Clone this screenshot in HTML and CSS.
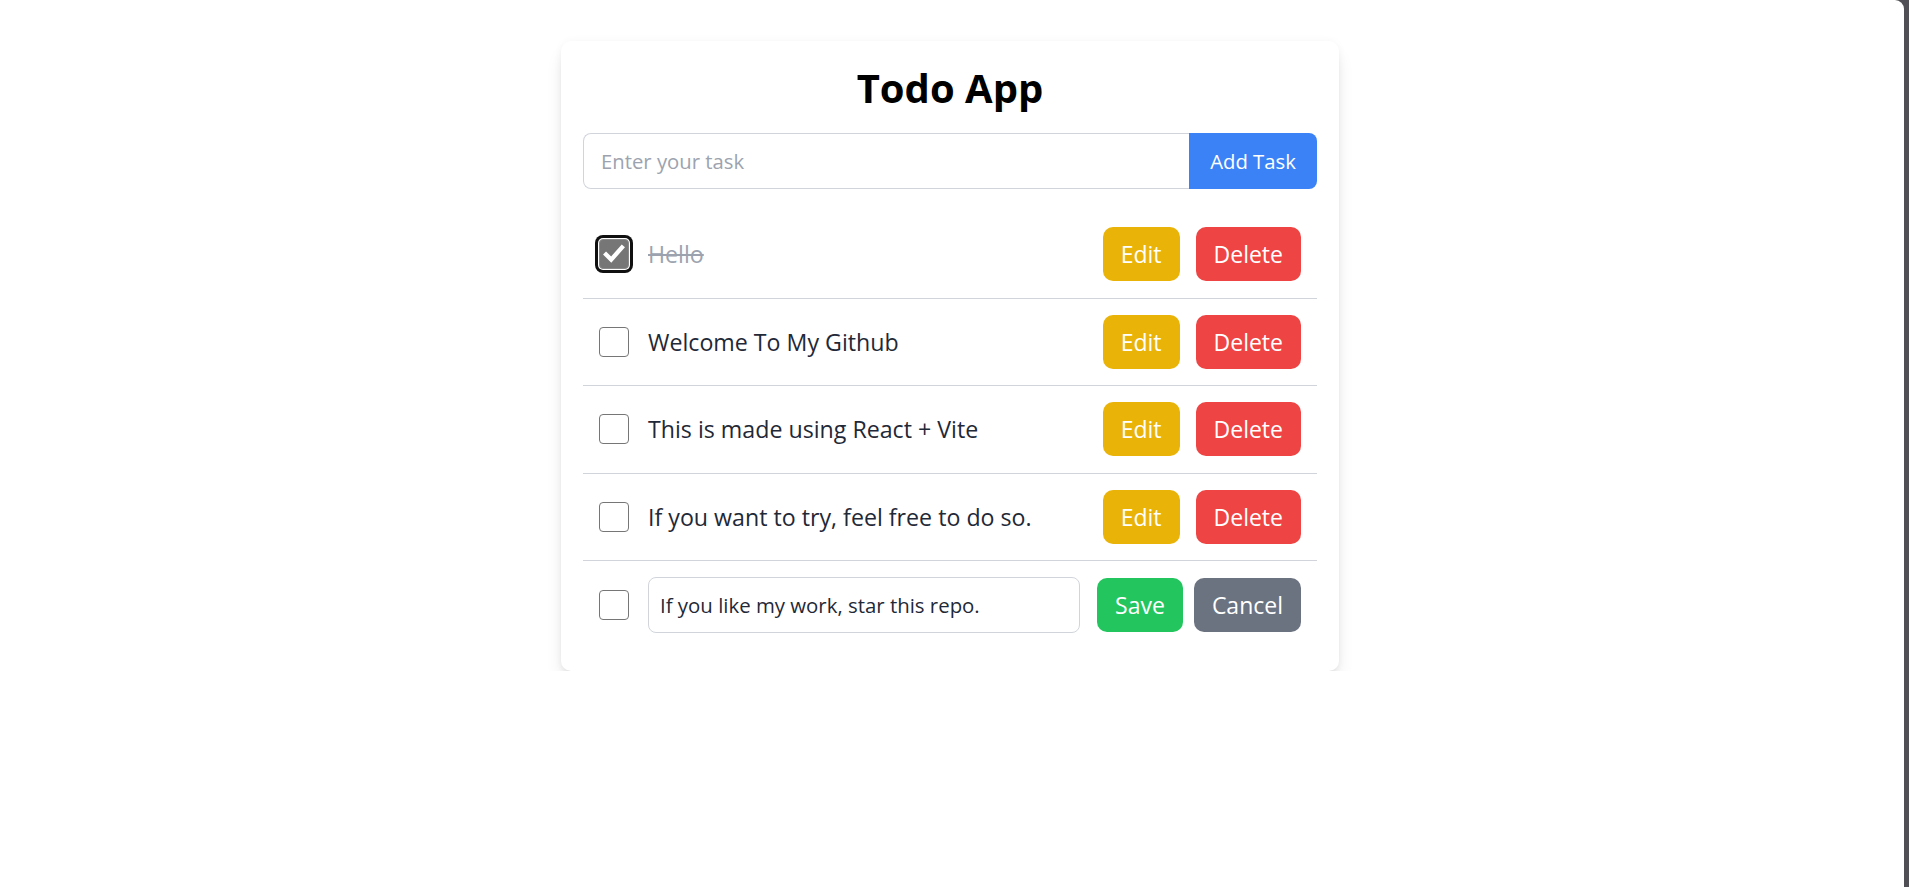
FILE: index.html
```html
<!DOCTYPE html>
<html lang="en">
<head>
<meta charset="utf-8">
<title>Todo App</title>
<link rel="stylesheet" href="styles.css">
</head>
<body>
<main class="page">
  <section class="card">
    <h1 class="title">Todo App</h1>
    <form class="add-row">
      <input class="add-input" type="text" placeholder="Enter your task">
      <button class="add-btn" type="button">Add Task</button>
    </form>
    <ul class="todo-list">
      <li class="todo">
        <div class="todo-main">
          <span class="check is-checked focused">
            <svg viewBox="0 0 30 30" width="30" height="30"><path d="M6.5 15.5 L12 21 L23.5 8" fill="none" stroke="#fff" stroke-width="4.6" stroke-linecap="square" stroke-linejoin="miter"/></svg>
          </span>
          <span class="todo-text done">Hello</span>
        </div>
        <div class="actions">
          <button class="btn btn-edit" type="button">Edit</button>
          <button class="btn btn-delete" type="button">Delete</button>
        </div>
      </li>
      <li class="todo">
        <div class="todo-main">
          <span class="check"></span>
          <span class="todo-text">Welcome To My Github</span>
        </div>
        <div class="actions">
          <button class="btn btn-edit" type="button">Edit</button>
          <button class="btn btn-delete" type="button">Delete</button>
        </div>
      </li>
      <li class="todo">
        <div class="todo-main">
          <span class="check"></span>
          <span class="todo-text">This is made using React + Vite</span>
        </div>
        <div class="actions">
          <button class="btn btn-edit" type="button">Edit</button>
          <button class="btn btn-delete" type="button">Delete</button>
        </div>
      </li>
      <li class="todo">
        <div class="todo-main">
          <span class="check"></span>
          <span class="todo-text">If you want to try, feel free to do so.</span>
        </div>
        <div class="actions">
          <button class="btn btn-edit" type="button">Edit</button>
          <button class="btn btn-delete" type="button">Delete</button>
        </div>
      </li>
      <li class="todo editing">
        <div class="todo-main grow">
          <span class="check"></span>
          <input class="edit-input" type="text" value="If you like my work, star this repo.">
        </div>
        <div class="actions tight">
          <button class="btn btn-save" type="button">Save</button>
          <button class="btn btn-cancel" type="button">Cancel</button>
        </div>
      </li>
    </ul>
  </section>
</main>
<div class="window-edge"><div class="window-edge-inner"></div></div>
</body>
</html>
```

FILE: styles.css
```css
* { box-sizing: border-box; }

html, body {
  margin: 0;
  padding: 0;
  background: #ffffff;
}

body {
  font-family: "Open Sans", "Noto Sans", sans-serif;
  color: #1f2937;
}

.page {
  padding: 41px 9px 0 0;
}

.card {
  width: 778px;
  margin: 0 auto;
  padding: 22px;
  background: #fff;
  border-radius: 10px;
  box-shadow: 0 12px 19px -4px rgba(0, 0, 0, 0.12), 0 5px 8px -5px rgba(0, 0, 0, 0.12), 0 0 8px rgba(0, 0, 0, 0.04);
}

.title {
  margin: 0 0 20px;
  font-size: 40px;
  line-height: 50px;
  font-weight: 700;
  text-align: center;
  color: #000;
}

.add-row {
  display: flex;
  height: 56px;
  margin: 0 0 22px;
}

.add-input {
  flex: 1;
  min-width: 0;
  border: 1px solid #d1d5db;
  border-right: none;
  border-radius: 8px 0 0 8px;
  padding: 0 17px;
  font-family: inherit;
  font-size: 20.3px;
  color: #1f2937;
  outline: none;
}

.add-input::placeholder { color: #9ca3af; }

.add-btn {
  width: 128px;
  border: none;
  border-radius: 0 8px 8px 0;
  background: #3b82f6;
  color: #fff;
  font-family: inherit;
  font-size: 20.3px;
}

.todo-list {
  list-style: none;
  margin: 0;
  padding: 0;
}

.todo {
  display: flex;
  align-items: center;
  justify-content: space-between;
  padding: 16.25px 16px;
  border-bottom: 1px solid #d1d5db;
}

.todo.editing {
  border-bottom: none;
  padding-top: 16px;
  padding-bottom: 16px;
}

.todo-main {
  display: flex;
  align-items: center;
  gap: 19px;
}

.todo-main.grow {
  flex: 1;
  margin-right: 17px;
}

.check {
  flex: none;
  width: 30px;
  height: 30px;
  border: 1.5px solid #767676;
  border-radius: 4px;
  background: #fff;
  display: flex;
  align-items: center;
  justify-content: center;
}

.check.is-checked {
  background: #767676;
  border-color: #8a8a8a;
}

.check.focused {
  box-shadow: 0 0 0 1px #fff, 0 0 0 4px #101010;
}

.check svg { display: block; }

.todo-text {
  font-size: 23.2px;
  line-height: 30px;
  color: #1f2937;
}

.todo-text.done {
  color: #9ca3af;
  text-decoration: line-through;
}

.edit-input {
  flex: 1;
  min-width: 0;
  height: 56px;
  border: 1px solid #d1d5db;
  border-radius: 8px;
  padding: 0 11px;
  font-family: inherit;
  font-size: 20.4px;
  color: #1f2937;
  outline: none;
}

.actions {
  display: flex;
  gap: 16px;
}

.actions.tight { gap: 11px; }

.btn {
  height: 54px;
  padding: 0 18px;
  border: none;
  border-radius: 10px;
  color: #fff;
  font-family: inherit;
  font-size: 23px;
}

.btn-edit { background: #eab308; }
.btn-delete { background: #ef4444; }
.btn-save { background: #22c55e; }
.btn-cancel { background: #6b7280; }

.window-edge {
  position: fixed;
  top: 0;
  right: 0;
  width: 14px;
  height: 100%;
  background: #4f4f55;
}

.window-edge-inner {
  width: 9px;
  height: 100%;
  background: #fff;
  border-top-right-radius: 9px;
}
```
